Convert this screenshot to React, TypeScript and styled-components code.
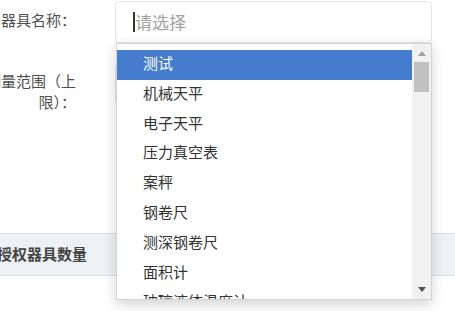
import * as React from 'react';
import styled, { createGlobalStyle } from 'styled-components';

const GlobalStyle = createGlobalStyle`
  html, body {
    margin: 0;
    padding: 0;
    background: #fff;
  }
  body {
    font-family: "Noto Sans CJK SC", "Noto Sans", sans-serif;
  }
`;

const Page = styled.div`
  position: relative;
  width: 455px;
  height: 311px;
  overflow: hidden;
  background: #fff;
  display: flex;
  flex-direction: column;
`;

const Form = styled.div`
  display: flex;
  flex-direction: column;
  gap: 20px;
  padding-top: 1px;
`;

const FormRow = styled.div`
  display: grid;
  grid-template-columns: 96px 317px;
  column-gap: 39px;
  margin-left: -20px;
  align-items: start;
`;

const Label = styled.label<{ $top: number }>`
  padding-top: ${(p) => p.$top}px;
  text-align: right;
  font-size: 15px;
  line-height: 21px;
  color: #505050;
`;

const Field = styled.div`
  position: relative;
`;

const SelectBox = styled.div`
  box-sizing: border-box;
  height: 42px;
  border: 1px solid #e4e4e4;
  border-radius: 4px;
  display: flex;
  align-items: center;
  padding: 0 0 2px 17px;
  font-size: 17px;
  color: #a3a3a3;
  background: #fff;
`;

const Caret = styled.span`
  width: 2px;
  height: 20px;
  margin-top: 2px;
  background: #333;
`;

const Dropdown = styled.div`
  position: absolute;
  top: 42px;
  left: 1px;
  width: 316px;
  height: 257px;
  box-sizing: border-box;
  border: 1px solid #d4d4d4;
  background: #fff;
  box-shadow: 0 4px 12px rgba(0, 0, 0, 0.18);
  display: flex;
  z-index: 10;
`;

const Options = styled.ul`
  flex: 1;
  margin: 0;
  padding: 6px 0 0;
  list-style: none;
  overflow: hidden;
`;

const Option = styled.li<{ $active?: boolean }>`
  height: 29.8px;
  padding-left: 26px;
  font-size: 15px;
  line-height: 26px;
  white-space: nowrap;
  color: ${(p) => (p.$active ? '#fff' : '#333')};
  background: ${(p) => (p.$active ? '#457ccd' : 'transparent')};
`;

const Scrollbar = styled.div`
  width: 19px;
  background: #f1f1f1;
  display: flex;
  flex-direction: column;
  align-items: center;
`;

const ArrowUp = styled.span`
  margin-top: 7px;
  width: 0;
  height: 0;
  border-left: 4.5px solid transparent;
  border-right: 4.5px solid transparent;
  border-bottom: 5px solid #a3a3a3;
`;

const Thumb = styled.span`
  margin-top: 6px;
  width: 15px;
  height: 30px;
  background: #c1c1c1;
`;

const Track = styled.span`
  flex: 1;
`;

const ArrowDown = styled.span`
  margin-bottom: 7px;
  width: 0;
  height: 0;
  border-left: 4.5px solid transparent;
  border-right: 4.5px solid transparent;
  border-top: 5px solid #505050;
`;

const TableHead = styled.div`
  margin-top: 121px;
  height: 43px;
  box-sizing: border-box;
  border-top: 1px solid #dcdfe3;
  border-bottom: 1px solid #dcdfe3;
  background: #eef2f5;
  display: flex;
  align-items: center;
  padding-bottom: 3px;
`;

const HeadCell = styled.div`
  margin-left: -3px;
  font-size: 15px;
  font-weight: bold;
  color: #444;
`;

const items = [
  '测试',
  '机械天平',
  '电子天平',
  '压力真空表',
  '案秤',
  '钢卷尺',
  '测深钢卷尺',
  '面积计',
  '玻璃液体温度计',
  '压力表',
];

export default function App() {
  return (
    <Page>
      <GlobalStyle />
      <Form>
        <FormRow>
          <Label $top={8}>器具名称：</Label>
          <Field>
            <SelectBox>
              <Caret />
              请选择
            </SelectBox>
            <Dropdown>
              <Options>
                {items.map((name, i) => (
                  <Option key={name} $active={i === 0}>
                    {name}
                  </Option>
                ))}
              </Options>
              <Scrollbar>
                <ArrowUp />
                <Thumb />
                <Track />
                <ArrowDown />
              </Scrollbar>
            </Dropdown>
          </Field>
        </FormRow>
        <FormRow>
          <Label $top={7}>测量范围（上限）：</Label>
          <Field>
            <SelectBox />
          </Field>
        </FormRow>
      </Form>
      <TableHead>
        <HeadCell>授权器具数量</HeadCell>
      </TableHead>
    </Page>
  );
}
